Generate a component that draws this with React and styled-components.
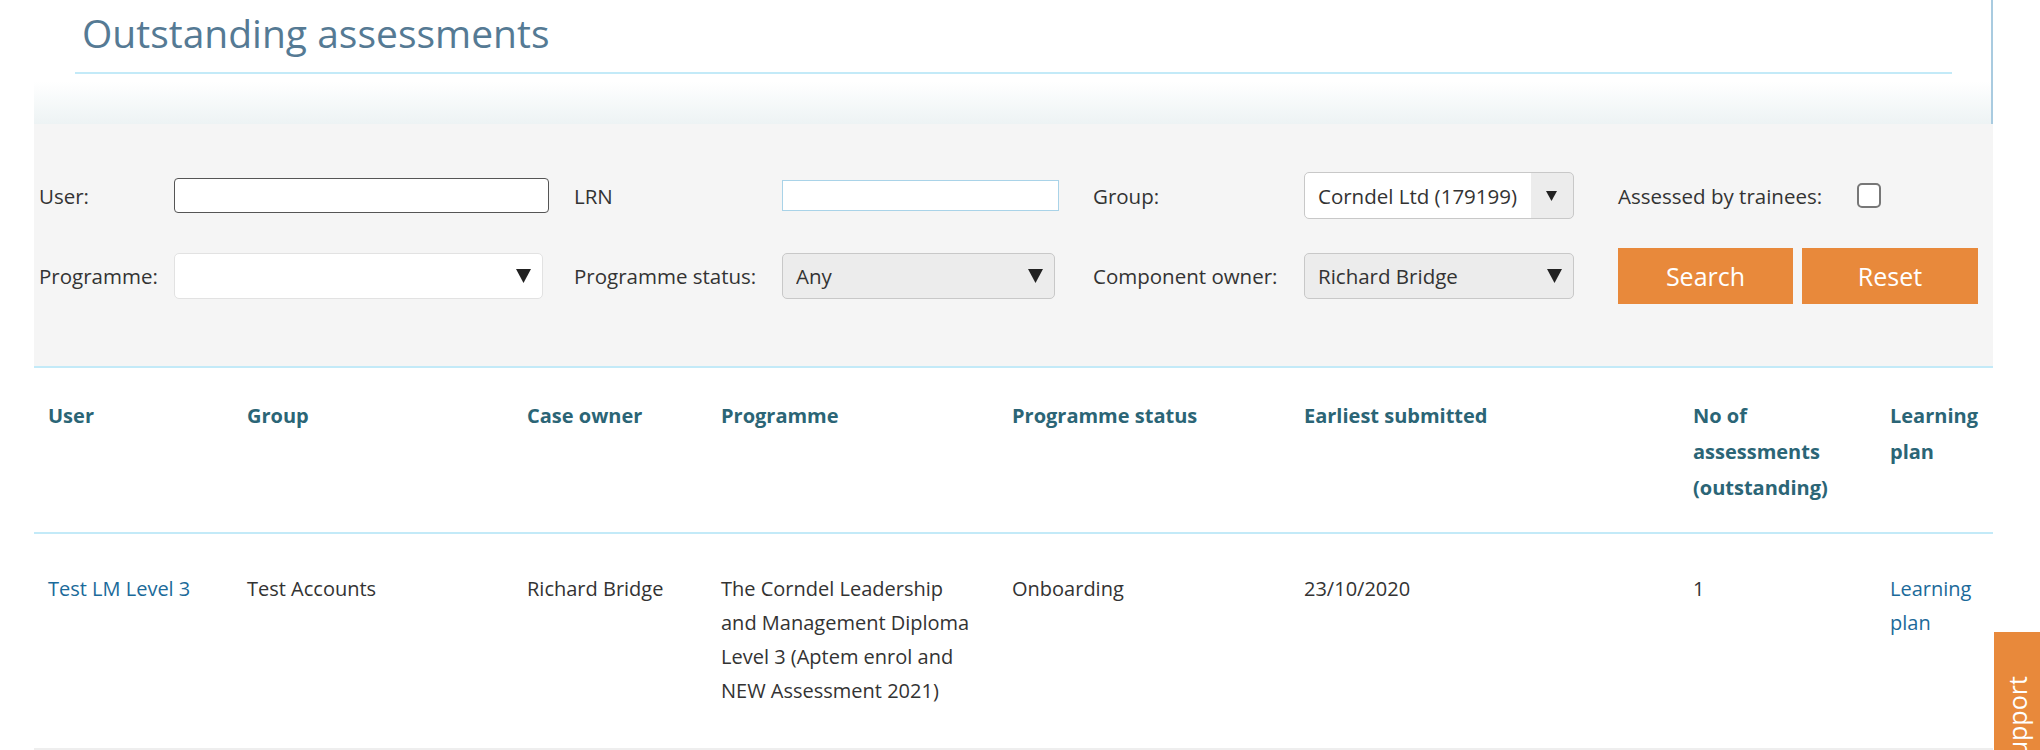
import styled, { createGlobalStyle } from 'styled-components';

const GlobalStyle = createGlobalStyle`
  body {
    margin: 0;
    background: #fff;
    font-family: 'Open Sans', 'Liberation Sans', sans-serif;
    color: #333;
  }
`;

const Page = styled.div`
  margin-left: 34px;
  width: 1959px;
`;

const Header = styled.header`
  height: 124px;
  box-sizing: border-box;
  border-right: 2px solid #a9cbe0;
  display: flex;
  flex-direction: column;
`;

const TitleBar = styled.div`
  margin: 0 39px 0 41px;
  padding: 10px 7px 16px;
  border-bottom: 2px solid #c3eaf8;
`;

const Title = styled.h1`
  margin: 0;
  font-size: 39px;
  line-height: 46px;
  font-weight: 400;
  color: #557a94;
`;

const Fade = styled.div`
  flex: 1;
  background: linear-gradient(to bottom, #fff 0%, #fff 15%, #edf3f4 100%);
`;

const Filters = styled.form`
  display: grid;
  grid-template-columns: 135px 400px 208px 311px 211px 314px 1fr;
  row-gap: 29px;
  align-items: center;
  padding: 48px 0 62px 5px;
  background: #f5f5f5;
  border-bottom: 2px solid #c3eaf8;
`;

const Label = styled.label`
  font-size: 20.5px;
  line-height: 28px;
  color: #333;
`;

const TextInput = styled.input`
  box-sizing: border-box;
  width: ${p => p.$width}px;
  height: ${p => p.$height}px;
  border: 1px solid ${p => p.$border};
  border-radius: ${p => p.$radius}px;
  background: #fff;
  font-family: inherit;
  font-size: 20px;
  padding: 0 12px;
  outline: none;
`;

const SelectWrap = styled.div`
  position: relative;
  width: ${p => p.$width}px;
`;

const Select = styled.select`
  appearance: none;
  -webkit-appearance: none;
  box-sizing: border-box;
  width: 100%;
  height: ${p => (p.$tall ? 47 : 46)}px;
  padding: 0 40px 0 13px;
  border: 1px solid ${p => (p.$plain ? '#e2e2e2' : '#c8c8c8')};
  border-radius: 5px;
  background: ${p =>
    p.$grey
      ? '#ececec'
      : p.$split
      ? 'linear-gradient(to right, #fff 0, #fff 226px, #ececec 226px)'
      : '#fff'};
  font-family: inherit;
  font-size: 20.5px;
  color: #333;
  outline: none;
`;

const Arrow = styled.svg`
  position: absolute;
  top: 50%;
  right: ${p => (p.$small ? 17 : 12)}px;
  transform: translateY(-50%);
  width: ${p => (p.$small ? 11 : 15)}px;
  height: ${p => (p.$small ? 10 : 14)}px;
  pointer-events: none;
`;

const CheckRow = styled.div`
  display: flex;
  align-items: center;
`;

const CheckLabel = styled(Label)`
  width: 239px;
`;

const Checkbox = styled.span`
  display: inline-block;
  box-sizing: border-box;
  width: 24px;
  height: 25px;
  border: 2px solid #777;
  border-radius: 5px;
  background: #fff;
`;

const Buttons = styled.div`
  display: flex;
  gap: 9px;
`;

const Button = styled.button`
  width: ${p => p.$width}px;
  height: 56px;
  border: none;
  background: #e8893b;
  color: #fff;
  font-family: inherit;
  font-size: 25px;
  padding: 0;
  cursor: pointer;
`;

const Table = styled.table`
  width: 1959px;
  table-layout: fixed;
  border-collapse: collapse;
`;

const Th = styled.th`
  padding: 30px ${p => p.$pr || 14}px 26px 14px;
  text-align: left;
  vertical-align: top;
  font-size: 20px;
  line-height: 36px;
  font-weight: 700;
  color: #2b6576;
  border-bottom: 2px solid #c3eaf8;
`;

const Td = styled.td`
  padding: 38px ${p => p.$pr || 14}px 40px 14px;
  vertical-align: top;
  font-size: 20px;
  line-height: 34px;
  color: #333;
  border-bottom: 2px solid #eee;
`;

const Link = styled.a`
  color: #1b6a9a;
  text-decoration: none;
`;

const SupportTab = styled.div`
  position: fixed;
  right: 0;
  top: 632px;
  width: 46px;
  height: 200px;
  background: #e8893b;
  display: flex;
  justify-content: center;
`;

const SupportText = styled.span`
  margin-top: 44px;
  writing-mode: vertical-rl;
  transform: rotate(180deg);
  color: #fff;
  font-size: 25px;
  line-height: 46px;
  height: 104px;
  text-align: right;
`;

const DownArrow = ({ small }) => (
  <Arrow $small={small} viewBox="0 0 15 14" preserveAspectRatio="none">
    <path d="M0 0 H15 L7.5 14 Z" fill="#222" />
  </Arrow>
);

const columns = [
  { title: 'User', width: 199 },
  { title: 'Group', width: 280 },
  { title: 'Case owner', width: 194 },
  { title: 'Programme', width: 291, pr: 18 },
  { title: 'Programme status', width: 292 },
  { title: 'Earliest submitted', width: 389 },
  { title: 'No of assessments (outstanding)', width: 197, pr: 30 },
  { title: 'Learning plan', width: 117 },
];

export default function App() {
  return (
    <>
      <GlobalStyle />
      <Page>
        <Header>
          <TitleBar>
            <Title>Outstanding assessments</Title>
          </TitleBar>
          <Fade />
        </Header>

        <Filters onSubmit={e => e.preventDefault()}>
          <Label>User:</Label>
          <TextInput $width={375} $height={35} $border="#555" $radius={4} />
          <Label>LRN</Label>
          <TextInput $width={277} $height={31} $border="#a9d3e8" $radius={0} />
          <Label>Group:</Label>
          <SelectWrap $width={270}>
            <Select $tall $split defaultValue="corndel">
              <option value="corndel">Corndel Ltd (179199)</option>
            </Select>
            <DownArrow small />
          </SelectWrap>
          <CheckRow>
            <CheckLabel>Assessed by trainees:</CheckLabel>
            <Checkbox />
          </CheckRow>

          <Label>Programme:</Label>
          <SelectWrap $width={369}>
            <Select $plain defaultValue="">
              <option value=""></option>
            </Select>
            <DownArrow />
          </SelectWrap>
          <Label>Programme status:</Label>
          <SelectWrap $width={273}>
            <Select $grey defaultValue="any">
              <option value="any">Any</option>
            </Select>
            <DownArrow />
          </SelectWrap>
          <Label>Component owner:</Label>
          <SelectWrap $width={270}>
            <Select $grey defaultValue="rb">
              <option value="rb">Richard Bridge</option>
            </Select>
            <DownArrow />
          </SelectWrap>
          <Buttons>
            <Button $width={175}>Search</Button>
            <Button $width={176} type="reset">Reset</Button>
          </Buttons>
        </Filters>

        <Table>
          <colgroup>
            {columns.map(c => (
              <col key={c.title} style={{ width: c.width }} />
            ))}
          </colgroup>
          <thead>
            <tr>
              {columns.map(c => (
                <Th key={c.title} $pr={c.pr}>{c.title}</Th>
              ))}
            </tr>
          </thead>
          <tbody>
            <tr>
              <Td><Link href="#">Test LM Level 3</Link></Td>
              <Td>Test Accounts</Td>
              <Td>Richard Bridge</Td>
              <Td $pr={18}>The Corndel Leadership and Management Diploma Level 3 (Aptem enrol and NEW Assessment 2021)</Td>
              <Td>Onboarding</Td>
              <Td>23/10/2020</Td>
              <Td $pr={30}>1</Td>
              <Td><Link href="#">Learning plan</Link></Td>
            </tr>
          </tbody>
        </Table>
      </Page>
      <SupportTab>
        <SupportText>Support</SupportText>
      </SupportTab>
    </>
  );
}
